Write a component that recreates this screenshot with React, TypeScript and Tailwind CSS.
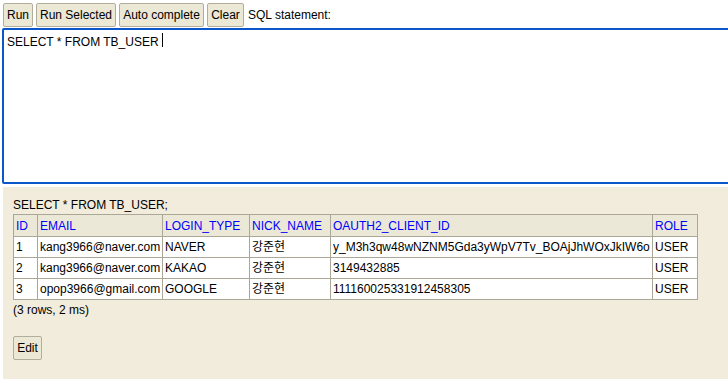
import React from "react";

const font = { fontFamily: '"Liberation Sans", Arial, "Noto Sans CJK KR", sans-serif' };

function Btn({ children, className = "" }: { children: React.ReactNode; className?: string }) {
  return (
    <div
      className={`h-[24px] shrink-0 whitespace-nowrap flex items-center justify-center border border-[#b3ae9c] rounded-[2px] bg-[#ebe8d6] text-[12px] text-black ${className}`}
    >
      {children}
    </div>
  );
}

const rows = [
  ["1", "kang3966@naver.com", "NAVER", "강준현", "y_M3h3qw48wNZNM5Gda3yWpV7Tv_BOAjJhWOxJkIW6o", "USER"],
  ["2", "kang3966@naver.com", "KAKAO", "강준현", "3149432885", "USER"],
  ["3", "opop3966@gmail.com", "GOOGLE", "강준현", "111160025331912458305", "USER"],
];
const headers = ["ID", "EMAIL", "LOGIN_TYPE", "NICK_NAME", "OAUTH2_CLIENT_ID", "ROLE"];
const widths = ["w-[24px]", "w-[125px]", "w-[87px]", "w-[81px]", "w-[322px]", "w-[45px]"];

export default function App() {
  return (
    <div className="w-[728px] h-[379px] bg-white overflow-hidden text-[12px] text-black" style={font}>
      <div className="flex items-center pt-[3px] pl-[3px] gap-[3px] h-[27px]">
        <Btn className="w-[30px]">Run</Btn>
        <Btn className="w-[80px]">Run Selected</Btn>
        <Btn className="w-[85px]">Auto complete</Btn>
        <Btn className="w-[37px]">Clear</Btn>
        <span className="ml-[1px] whitespace-nowrap">SQL statement:</span>
      </div>
      <div className="mt-[1px] ml-[2px] w-[740px] h-[156px] border-2 border-[#0b57c9] rounded-[2px] bg-white pl-[3px] pt-[3px]">
        <span className="text-[12px] leading-[14px]">SELECT * FROM TB_USER</span>
        <span className="inline-block w-px h-[14px] bg-black align-top ml-[3px]" />
      </div>
      <div className="mt-[3px] ml-[3px] h-[192px] bg-[#f1ecdb] pl-[10px] pt-[11px]">
        <div className="leading-[14px] h-[16px]">SELECT * FROM TB_USER;</div>
        <table className="border-collapse border border-[#aba797] table-fixed w-[685px]">
          <thead>
            <tr className="h-[22px] bg-[#ebe8d7]">
              {headers.map((h, i) => (
                <th
                  key={h}
                  className={`${widths[i]} border border-[#aba797] px-[2px] text-left font-normal text-[#0000ff] whitespace-nowrap`}
                >
                  {h}
                </th>
              ))}
            </tr>
          </thead>
          <tbody>
            {rows.map((r) => (
              <tr key={r[0]} className="h-[21px] bg-white">
                {r.map((c, i) => (
                  <td
                    key={i}
                    className="border border-[#aba797] px-[2px] whitespace-nowrap overflow-hidden"
                  >
                    {c}
                  </td>
                ))}
              </tr>
            ))}
          </tbody>
        </table>
        <div className="mt-[3px] leading-[14px]">(3 rows, 2 ms)</div>
        <Btn className="mt-[19px] w-[29px]">Edit</Btn>
      </div>
    </div>
  );
}
